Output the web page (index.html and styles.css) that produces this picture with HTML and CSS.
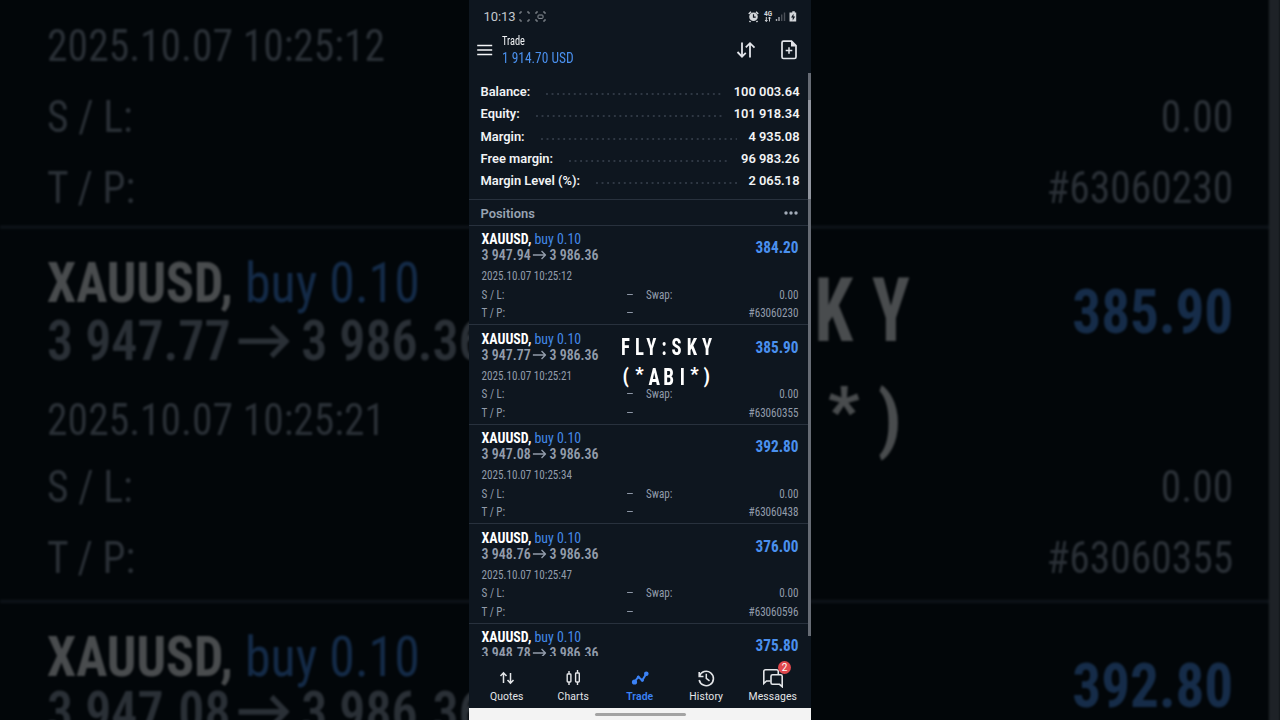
FILE: index.html
```
<!DOCTYPE html>
<html lang="en"><head><meta charset="utf-8"><title>Trade</title><link rel="stylesheet" href="styles.css"></head>
<body>
<div class="stage">
<div class="backdrop" id="backdrop"></div>
<main class="phone">
  <div class="status">
    <span class="clock">10:13</span>
    <svg class="cap" width="11" height="11" viewBox="0 0 11 11"><path d="M1 3V1h2M8 1h2v2M1 8v2h2M8 10h2V8"/></svg>
    <svg class="cap two" width="11" height="11" viewBox="0 0 11 11"><path d="M1 3V1h2M8 1h2v2M1 8v2h2M8 10h2V8"/><rect x="3" y="4" width="5" height="3.4" rx=".8"/></svg>
    <span class="grow"></span>
    <svg width="50" height="13" viewBox="0 0 50 13"><g fill="none" stroke="#d3d6da"><circle cx="5.5" cy="6.8" r="4.3" fill="#d3d6da" stroke="none"/><path d="M.8 4 3 1.8M10.200 4 8 1.800M2.500 11l-1 1M8.500 11l1 1" stroke-width="1.600"/><path d="M5.500 4.200v3h2.200" stroke="#0f1620" stroke-width="1.200"/></g><text x="16" y="6" class="g4">4G</text><path d="M18.300 7v4.500M17 10l1.300 1.500 1.200-1.500M21.500 11.500V7M20.300 8.500 21.500 7l1.200 1.500" fill="none" stroke="#d3d6da"/><path d="M28.500 9v2M31 7v4" stroke="#a5a9ae" stroke-width="1.400"/><path d="M33.700 4.500V11M36.500 2.500V11" stroke="#4b5058" stroke-width="1.400"/><path d="M43 2.500h1.300V1.200h2.500v1.300H48.200V11.500H41.500V2.500z" fill="#d3d6da"/><path d="M45.500 3.800 43 7.400h1.700v3L47.200 6.500h-1.700z" fill="#0f1620"/></svg>
  </div>
  <header class="top">
    <svg width="16" height="12" viewBox="0 0 16 12"><path d="M.2 1.500h15M.2 6h15M.2 10.500h15" stroke="#f4f5f7" stroke-width="1.700"/></svg>
    <div class="title"><div class="t1 rc">Trade</div><div class="t2 rc">1 914.70 USD</div></div>
    <svg class="swap" width="20" height="18" viewBox="0 0 20 18"><path d="M6 1.500v14M1.500 11 6 15.600 9.800 11.800M14 16.500V2.500M9.800 6.400 14 2.200l4.500 4.400" fill="none" stroke="#e3e5ea" stroke-width="1.800"/></svg>
    <svg width="16" height="20" viewBox="0 0 16 20"><path d="M2.500 1.200h8L15 5.700V17q0 1.500-1.500 1.500h-11Q1 18.500 1 17V2.700Q1 1.200 2.500 1.200z" fill="none" stroke="#e3e5ea" stroke-width="1.700"/><path d="M10 1v5.500h5z" fill="#e3e5ea"/><path d="M8 7.200v6.600M4.700 10.500h6.600" stroke="#e3e5ea" stroke-width="1.500"/></svg>
  </header>
  <section class="account">
    <div class="acc"><b>Balance:</b><i></i><b>100 003.64</b></div>
    <div class="acc"><b>Equity:</b><i></i><b>101 918.34</b></div>
    <div class="acc"><b>Margin:</b><i></i><b>4 935.08</b></div>
    <div class="acc"><b>Free margin:</b><i></i><b>96 983.26</b></div>
    <div class="acc"><b>Margin Level (%):</b><i></i><b>2 065.18</b></div>
  </section>
  <div class="poshead"><b>Positions</b><svg width="14" height="4" viewBox="0 0 14 4"><g fill="#a3acb9"><circle cx="2" cy="2" r="1.700"/><circle cx="7" cy="2" r="1.700"/><circle cx="12" cy="2" r="1.700"/></g></svg></div>
  <div class="rows" id="rows"></div>
  <nav class="nav">
    <div class="tab"><svg width="20" height="20" viewBox="0 0 20 20"><path d="M6.500 15V5M3.500 8 6.500 4.800 9.500 8M13.500 5v10M10.500 12l3 3.200 3-3.200" fill="none" stroke="currentColor" stroke-width="1.500"/></svg><span>Quotes</span></div>
    <div class="tab"><svg width="20" height="20" viewBox="0 0 20 20"><path d="M6 3v3M6 14v3M14.500 2v3M14.500 14v3" stroke="currentColor" stroke-width="1.400"/><rect x="4.200" y="6" width="3.700" height="8" rx=".7" fill="none" stroke="currentColor" stroke-width="1.400"/><rect x="12.600" y="5" width="3.700" height="9" rx=".7" fill="none" stroke="currentColor" stroke-width="1.400"/></svg><span>Charts</span></div>
    <div class="tab on"><svg width="20" height="20" viewBox="0 0 20 20"><path d="M4 14.500 8.300 9l4 3.300 4-6.500" fill="none" stroke="currentColor" stroke-width="2"/><g fill="currentColor"><circle cx="4.500" cy="14" r="2.600"/><circle cx="8.300" cy="9" r="1.500"/><circle cx="12.300" cy="12.300" r="1.500"/><circle cx="16.300" cy="5.700" r="2.300"/></g></svg><span>Trade</span></div>
    <div class="tab"><svg width="20" height="20" viewBox="0 0 20 20"><path d="M3.200 4v4.500h4.300M3.400 8.200A7.200 7.200 0 1 1 3.200 12" fill="none" stroke="currentColor" stroke-width="1.600"/><path d="M10.300 5.700V10.300l3.200 2.600" fill="none" stroke="currentColor" stroke-width="1.500"/></svg><span>History</span></div>
    <div class="tab"><svg width="22" height="20" viewBox="0 0 22 20"><path d="M8.500 13H4.500L1.800 15.500V3.500Q1.800 1.700 3.600 1.700H14.500Q16.300 1.700 16.300 3.500V6" fill="none" stroke="currentColor" stroke-width="1.600"/><path d="M10.500 6.700h8.200q1.500 0 1.500 1.500v10.500L17.500 16.300h-7Q9 16.300 9 14.800V8.200q0-1.500 1.500-1.500z" fill="none" stroke="currentColor" stroke-width="1.600"/></svg><em>2</em><span>Messages</span></div>
  </nav>
  <div class="home"><i></i></div>
  <div class="mark m1">FLY:SKY</div>
  <div class="mark m2"><span class="paren">(</span><span class="star">*</span><span>A</span><span>B</span><span class="eye">I</span><span class="star last">*</span><span class="paren">)</span></div>
  <div class="scroll"></div><div class="scroll thumb"></div>
</main>
</div>
<script src="app.js"></script>
</body></html>
```
FILE: app.js
```
const positions = [
  ["3 947.94", "384.20", "2025.10.07 10:25:12", "#63060230"],
  ["3 947.77", "385.90", "2025.10.07 10:25:21", "#63060355"],
  ["3 947.08", "392.80", "2025.10.07 10:25:34", "#63060438"],
  ["3 948.76", "376.00", "2025.10.07 10:25:47", "#63060596"],
  ["3 948.78", "375.80"]
];
const arrow = '<svg class="arrow" width="15" height="10" viewBox="0 0 15 10"><path d="M.3 5h13.600M9.800 1 14 5 9.800 9" fill="none" stroke="currentColor" stroke-width="1.500"/></svg>';

function head(open, profit) {
  return `<div class="head"><div><div class="name"><b>XAUUSD,</b> <span>buy 0.10</span></div>
    <div class="price">${open}${arrow}3 986.36</div></div><div class="profit">${profit}</div></div>`;
}
function details(date, id, middle) {
  const dash = middle ? '<span class="dash">–</span>' : "<span></span>";
  return `<div class="line">${date}</div>
    <div class="line cols"><span>S / L:</span>${dash}<span>${middle ? "Swap:" : ""}</span><span>0.00</span></div>
    <div class="line cols"><span>T / P:</span>${dash}<span></span><span>${id}</span></div>`;
}
function row([open, profit, date, id], { showHead = true, showDetails = true, middle = true } = {}) {
  return `<article class="row"><div class="squeeze rc">${showHead ? head(open, profit) : '<div class="head empty"></div>'}${date && showDetails ? details(date, id, middle) : ""}</div></article>`;
}

document.getElementById("rows").innerHTML = positions.map(p => row(p)).join("");

// The enlarged copy shows only what falls outside the phone column.
const mark = [...document.querySelectorAll(".mark")].map(m => m.outerHTML).join("");
document.getElementById("backdrop").innerHTML = `<div class="zoomed"><div class="rows">${
  row(positions[0], { showHead: false, middle: false })}${
  row(positions[1], { middle: false })}${
  row(positions[2], { showDetails: false })}</div>${mark}<div class="scroll"></div></div>`;
```
FILE: styles.css
```
*{box-sizing:border-box}
body{margin:0;background:#020609;font-family:Roboto,"Liberation Sans",sans-serif}
.stage{position:relative;width:1280px;height:720px;overflow:hidden;display:flex;justify-content:center}
.rc{font-family:"Roboto Condensed",Roboto,sans-serif;font-stretch:75%}
.backdrop{position:absolute;inset:0;opacity:.28;filter:blur(1px)}
.zoomed{position:absolute;left:469px;top:0;width:342px;height:720px;padding-top:224.900px;transform:scale(3.743);transform-origin:171px 360px}
.phone{position:relative;width:342px;height:720px;background:#0e161f;display:flex;flex-direction:column;overflow:hidden}
.status{height:32px;display:flex;align-items:center;padding:0 13px 0 14.500px;color:#c4c8cd}
.clock{font-size:13px;letter-spacing:-.1px;margin-right:4px}
.cap{fill:none;stroke:#8e949b;stroke-width:1}
.two{margin-left:5px}
.grow{flex:1}
.g4{font:bold 6.500px Roboto,sans-serif;fill:#d3d6da}
.top{height:48px;display:flex;align-items:flex-start;padding:1px 14px 0 8px}
.top>svg{margin-top:11px}
.title{margin-left:8.800px;flex:1;padding-top:1px}
.t1,.t2{transform-origin:0 50%;white-space:nowrap}
.t1{font-size:12px;line-height:15px;color:#f0f2f5;transform:scaleX(.86)}
.t2{font-size:14.500px;line-height:19px;color:#4a90ee;transform:scaleX(.925)}
.top .swap{margin:8px 25px 0 0}
.top>svg:last-child{margin-top:7px}
.account{height:119px;padding:.2px 11.500px 0}
.acc{height:22.400px;display:flex;align-items:center;font-size:12.900px;color:#f1f3f5}
.acc b{font-weight:600}
.acc i{height:2px;margin:5px 11px 0 16px;flex:1;background:radial-gradient(circle at 1px 1px,#303945 .7px,transparent 1.100px) 0 0/5.570px 2px}
.poshead{height:25.800px;flex:none;border-top:1px solid #28313d;display:flex;justify-content:space-between;align-items:center;padding:2px 13px 0 11.500px;font-size:12.900px;color:#98a3b2}
.poshead b{font-weight:600}
.phone .rows{height:431.200px;overflow:hidden;flex:none}
.row{height:99.500px;border-top:1px solid #28313d;padding:6.700px 12px 0;color:#929cab}
.squeeze{width:342.600px;transform:translateX(.6px) scaleX(.925);transform-origin:0 0}
.head{display:flex;justify-content:space-between}
.empty{height:31.200px}
.name{font-size:15px;line-height:15.600px;white-space:nowrap;transform:translateY(.4px)}
.name b{color:#fff}
.name span{color:#4389e8}
.price{font-size:15px;line-height:15.600px;height:15.600px;font-weight:600;white-space:nowrap}
.arrow{margin:0 3px -.2px 2.400px}
.profit{font-size:16.500px;font-weight:700;line-height:30.400px;height:31px;color:#4a90ee;transform:translateY(.7px)}
.head+.line{margin-top:3.600px}
.line{font-size:12px;line-height:18.600px}
.cols{display:grid;grid-template-columns:155.800px 22px 1fr auto}
.dash{transform:scaleX(1.25);transform-origin:0 50%;width:7px}
.nav{height:51.500px;display:grid;grid-template-columns:repeat(5,66.500px);padding:12px 0 0 4.500px;color:#e3e5e8}
.tab{position:relative;display:flex;flex-direction:column;align-items:center;font-size:10.400px;letter-spacing:.1px}
.tab span{line-height:14px;margin-top:1.800px}
.on{color:#3b82f6;font-weight:600}
.tab em{position:absolute;left:38.500px;top:-6.500px;width:13px;height:13px;border-radius:50%;background:#e0484d;color:#fff;font:10px/13px Roboto,sans-serif;text-align:center}
.home{height:12px;margin-top:auto;background:#f3f3f3;display:flex;align-items:center;justify-content:center}
.home i{width:91px;height:3px;border-radius:2px;background:#a3a3a3}
.mark{position:absolute;white-space:nowrap;font:700 24px/28px "Roboto Condensed",Roboto,sans-serif;font-stretch:75%;color:#fff}
.m1{left:151.500px;top:333.100px;letter-spacing:6.500px;transform:scaleX(.775);transform-origin:0 50%}
.m2{left:150.200px;top:363.200px;display:grid;grid-template-columns:13px 14.500px 15px 14.500px 12.500px 11.500px 13px;align-items:center;justify-items:center;height:28px}
.m2 span{transform:scaleX(.8)}
.m2 .paren{font-size:20px;line-height:22px;transform:translateY(-1.500px)}
.m2 .star{font-size:18px;line-height:18px;font-weight:900;transform:translateY(-3.200px)}
.scroll{position:absolute;right:0;top:73px;width:3px;height:563px;background:#666b74}
.thumb{top:100px;height:99px;background:#9296a0}
```
